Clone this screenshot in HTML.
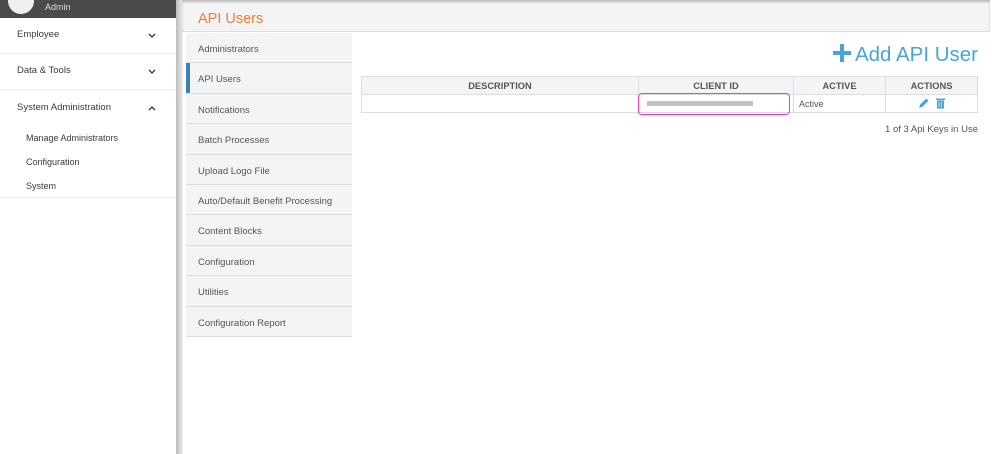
<!DOCTYPE html>
<html><head><meta charset="utf-8"><style>
*{box-sizing:border-box;margin:0;padding:0}
body{width:1000px;height:454px;overflow:hidden;background:#fff;font-family:"Liberation Sans",sans-serif;color:#444;position:relative}
.side{position:absolute;left:0;top:0;width:176px;height:454px;background:#fff}
.dark{height:18px;background:#4a4a4a;position:relative}
.dark .c{position:absolute;left:8px;top:-12px;width:26px;height:26px;border-radius:50%;background:#f0f0f0}
.dark span{position:absolute;left:45px;top:3px;font-size:9px;color:#ddd;line-height:9px}
.item{height:36px;line-height:34px;border-bottom:1.5px solid #ececec;font-size:9.5px;color:#3a3a3a;padding-left:17px;position:relative}
.item svg{position:absolute;left:148px;top:15px}
.sub{font-size:9px;color:#3a3a3a;padding-left:26px;height:24px;line-height:24px}
.shadow{position:absolute;left:176px;top:0;width:7px;height:454px;background:linear-gradient(90deg,#bbb,#eee)}
.top{position:absolute;left:182px;top:0;width:808px;height:32px;background:#f4f4f6;border-bottom:1px solid #ddd;box-shadow:inset 0 2px 2px #bbb}
.top h1{font-weight:normal;font-size:14.5px;color:#f07c33;position:absolute;left:16px;top:11px}
.menu{position:absolute;left:186px;top:33px;width:166px;background:#f3f4f6}
.menu div{height:30.4px;border-bottom:1px solid #dcdde0;font-size:9.5px;color:#555;padding:11px 0 0 12px;position:relative}
.menu .act::before{content:"";position:absolute;left:0;top:0;width:4px;height:30px;background:#3b82b8}
.add{position:absolute;right:22px;top:43px;font-size:20.5px;color:#4aa3d9}
table{position:absolute;left:361px;top:76px;width:617px;border-collapse:collapse;font-size:9px}
td,th{border:1px solid #dcdde0;height:18px}
th{background:#f4f4f6;font-weight:bold;color:#555;font-size:9.3px;text-align:center}
.cnt{position:absolute;right:22px;top:124px;font-size:9.5px;color:#555}
</style></head><body>
<div class="side">
<div class="dark"><div class="c"></div><span>Admin</span></div>
<div class="item">Employee<svg width="8" height="5"><path d="M1 1l3 3 3-3" stroke="#333" fill="none" stroke-width="1.3"/></svg></div>
<div class="item">Data &amp; Tools<svg width="8" height="5"><path d="M1 1l3 3 3-3" stroke="#333" fill="none" stroke-width="1.3"/></svg></div>
<div class="item" style="border:none;height:36px;line-height:36px">System Administration<svg width="8" height="5" style="top:16px"><path d="M1 4l3-3 3 3" stroke="#333" fill="none" stroke-width="1.3"/></svg></div>
<div class="sub">Manage Administrators</div>
<div class="sub">Configuration</div>
<div class="sub" style="border-bottom:1.5px solid #ececec">System</div>
</div>
<div class="shadow"></div>
<div class="top"><h1>API Users</h1></div>
<div class="menu">
<div>Administrators</div><div class="act">API Users</div><div>Notifications</div><div>Batch Processes</div><div>Upload Logo File</div><div>Auto/Default Benefit Processing</div><div>Content Blocks</div><div>Configuration</div><div>Utilities</div><div>Configuration Report</div>
</div>
<div class="add"><svg width="18" height="18" style="margin-right:4px;vertical-align:-1px"><path d="M7 0h4v7h7v4h-7v7h-4v-7h-7v-4h7z" fill="#4aa3d9"/></svg>Add API User</div>
<table>
<tr><th style="width:277px">DESCRIPTION</th><th style="width:155px">CLIENT ID</th><th style="width:92px">ACTIVE</th><th>ACTIONS</th></tr>
<tr><td></td><td style="position:relative"><div style="position:absolute;left:-1px;top:-2px;width:152px;height:22px;border:1.5px solid #e83ec0;border-radius:4px"></div><div style="margin-left:8px;width:106px;height:5px;background:#999;opacity:.6"></div></td><td style="padding-left:5px;color:#555">Active</td><td style="text-align:center"><svg width="28" height="12"><path d="M1 11l1.2-3.5 6-6 2.3 2.3-6 6z" fill="#4aa3d9"/><rect x="19" y="3.5" width="7" height="8" fill="#4aa3d9"/><rect x="18" y="1.5" width="9" height="1.5" fill="#4aa3d9"/><path d="M21 5v5M23.5 5v5" stroke="#fff" stroke-width=".7"/></svg></td></tr>
</table>
<div class="cnt">1 of 3 Api Keys in Use</div>
</body></html>
